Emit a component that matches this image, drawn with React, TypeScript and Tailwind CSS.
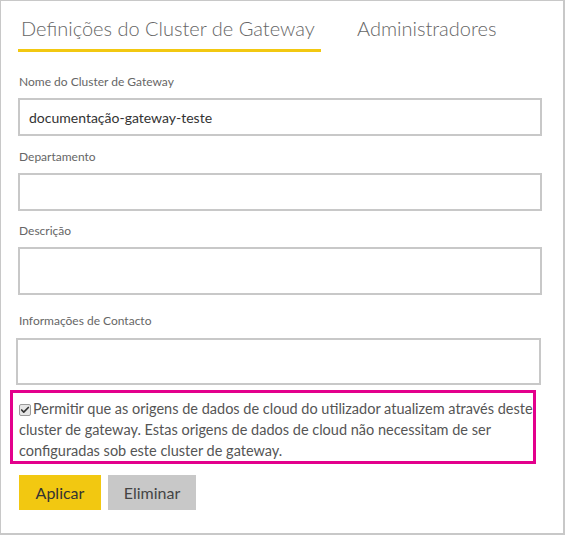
import { Check } from 'lucide-react'

const font = { fontFamily: 'Lato, "Noto Sans", sans-serif' }

interface FieldProps {
  label: string
  value?: string
  top: string
  gap: string
  boxClass: string
}

function Field({ label, value, top, gap, boxClass }: FieldProps) {
  return (
    <div className={top}>
      <div className={`text-[12px] leading-[16px] text-[#666] pl-[1px] ${gap}`}>{label}</div>
      <div className={`border-2 border-[#c8c8c8] bg-white flex items-center ${boxClass}`}>
        {value && <span className="pl-[9px] text-[14px] text-[#333]">{value}</span>}
      </div>
    </div>
  )
}

export default function App() {
  return (
    <div
      className="w-[565px] h-[535px] bg-white border border-[#c8c8c8] border-r-2 border-b-2 overflow-hidden"
      style={font}
    >
      <div className="pl-[17px]">
        {/* tabs */}
        <div className="flex items-end pt-[13px] whitespace-nowrap font-['Lato_Light',Lato,sans-serif]">
          <div className="px-[3px] pb-[7px] border-b-[3px] border-[#f2c811] text-[20px] leading-[28px] font-light text-[#666] w-[303px]">
            Definições do Cluster de Gateway
          </div>
          <div className="ml-[36px] pb-[10px] text-[20px] leading-[28px] font-light text-[#666]">
            Administradores
          </div>
        </div>

        <Field
          label="Nome do Cluster de Gateway"
          value="documentação-gateway-teste"
          top="mt-[22px]"
          gap="mb-[8px]"
          boxClass="w-[524px] h-[38px]"
        />
        <Field label="Departamento" top="mt-[13px]" gap="mb-[8px]" boxClass="w-[524px] h-[38px]" />
        <Field label="Descrição" top="mt-[12px]" gap="mb-[8px]" boxClass="w-[524px] h-[48px]" />
        <div className="mt-[18px]">
          <div className="text-[12px] leading-[16px] text-[#666] pl-[1px] mb-[9px]">Informações de Contacto</div>
          <div className="border-2 border-[#c8c8c8] w-[525px] h-[47px] -ml-[2px]" />
        </div>

        {/* highlighted option */}
        <div className="mt-[5px] -ml-[8px] w-[526px] h-[74px] border-[3px] border-[#e3008c] pl-[6px] pt-[5px]">
          <p className="text-[14.5px] leading-[21px] text-[#555]">
            <span className="inline-flex items-center justify-center w-[12px] h-[12px] mr-[2px] align-[-1px] bg-[#e6e6e6] border border-[#9a9a9a] rounded-[2px]">
              <Check className="w-[10px] h-[10px] text-[#333]" strokeWidth={4} />
            </span>
            Permitir que as origens de dados de cloud do utilizador atualizem através deste
            cluster de gateway. Estas origens de dados de cloud não necessitam de ser
            configuradas sob este cluster de gateway.
          </p>
        </div>

        <div className="mt-[11px] flex gap-[7px] pl-[1px]">
          <button className="w-[82px] h-[35px] bg-[#f2c811] text-[16px] text-[#333]">Aplicar</button>
          <button className="w-[88px] h-[35px] bg-[#c8c8c8] text-[16px] text-[#444]">Eliminar</button>
        </div>
      </div>
    </div>
  )
}
